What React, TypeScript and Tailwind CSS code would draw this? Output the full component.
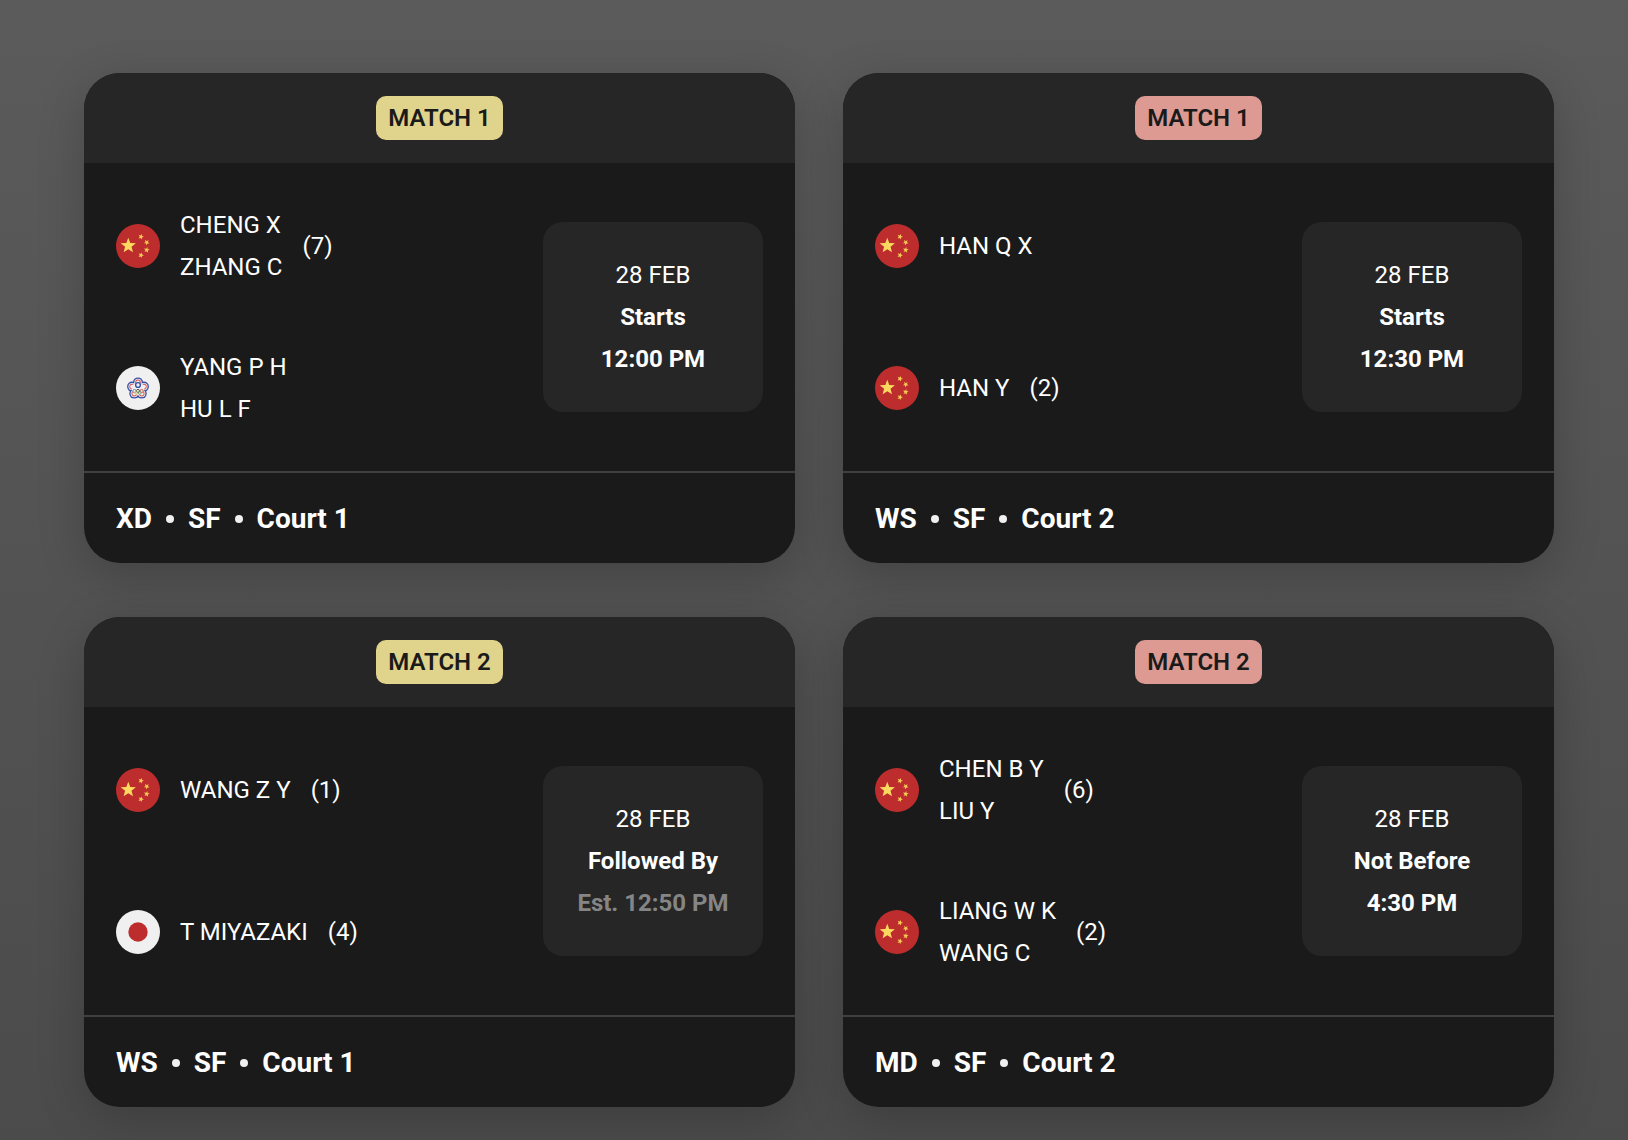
type Flag = 'cn' | 'tpe' | 'jp';

type Side = {
  flag: Flag;
  names: string[];
  seed?: string;
};

type Match = {
  label: string;
  badge: string;
  sides: Side[];
  date: string;
  status: string;
  time: string;
  muted?: boolean;
  footer: string[];
};

const matches: Match[] = [
  {
    label: 'MATCH 1',
    badge: 'bg-[#e0d38c]',
    sides: [
      { flag: 'cn', names: ['CHENG X', 'ZHANG C'], seed: '(7)' },
      { flag: 'tpe', names: ['YANG P H', 'HU L F'] },
    ],
    date: '28 FEB',
    status: 'Starts',
    time: '12:00 PM',
    footer: ['XD', 'SF', 'Court 1'],
  },
  {
    label: 'MATCH 1',
    badge: 'bg-[#dc9a92]',
    sides: [
      { flag: 'cn', names: ['HAN Q X'] },
      { flag: 'cn', names: ['HAN Y'], seed: '(2)' },
    ],
    date: '28 FEB',
    status: 'Starts',
    time: '12:30 PM',
    footer: ['WS', 'SF', 'Court 2'],
  },
  {
    label: 'MATCH 2',
    badge: 'bg-[#e0d38c]',
    sides: [
      { flag: 'cn', names: ['WANG Z Y'], seed: '(1)' },
      { flag: 'jp', names: ['T MIYAZAKI'], seed: '(4)' },
    ],
    date: '28 FEB',
    status: 'Followed By',
    time: 'Est. 12:50 PM',
    muted: true,
    footer: ['WS', 'SF', 'Court 1'],
  },
  {
    label: 'MATCH 2',
    badge: 'bg-[#dc9a92]',
    sides: [
      { flag: 'cn', names: ['CHEN B Y', 'LIU Y'], seed: '(6)' },
      { flag: 'cn', names: ['LIANG W K', 'WANG C'], seed: '(2)' },
    ],
    date: '28 FEB',
    status: 'Not Before',
    time: '4:30 PM',
    footer: ['MD', 'SF', 'Court 2'],
  },
];

function star(cx: number, cy: number, r: number, rot = 0) {
  const pts: string[] = [];
  for (let i = 0; i < 10; i++) {
    const rad = i % 2 === 0 ? r : r * 0.42;
    const a = ((-90 + rot + i * 36) * Math.PI) / 180;
    pts.push(`${(cx + rad * Math.cos(a)).toFixed(2)},${(cy + rad * Math.sin(a)).toFixed(2)}`);
  }
  return pts.join(' ');
}

const petals = [
  [22, 16.4],
  [27.9, 20.6],
  [25.7, 27.6],
  [18.3, 27.6],
  [16.1, 20.6],
];

function FlagIcon({ flag }: { flag: Flag }) {
  if (flag === 'cn') {
    return (
      <svg width="44" height="44" viewBox="0 0 44 44" className="shrink-0">
        <circle cx="22" cy="22" r="22" fill="#bd2d2d" />
        <polygon points={star(12.3, 21.8, 8)} fill="#fbd95f" />
        <polygon points={star(25, 12.7, 3, 20)} fill="#f5cb55" />
        <polygon points={star(30.7, 18.4, 3, 40)} fill="#f5cb55" />
        <polygon points={star(30.7, 26, 3, 10)} fill="#f5cb55" />
        <polygon points={star(25, 31.2, 3, 20)} fill="#f5cb55" />
      </svg>
    );
  }
  if (flag === 'jp') {
    return (
      <svg width="44" height="44" viewBox="0 0 44 44" className="shrink-0">
        <circle cx="22" cy="22" r="22" fill="#f0f0f0" />
        <circle cx="22" cy="22" r="9.7" fill="#bd2d2d" />
      </svg>
    );
  }
  return (
    <svg width="44" height="44" viewBox="0 0 44 44" className="shrink-0">
      <circle cx="22" cy="22" r="22" fill="#f0f0f0" />
      {petals.map(([x, y], i) => (
        <circle key={i} cx={x} cy={y} r="5" fill="#3650a8" />
      ))}
      {petals.map(([x, y], i) => (
        <circle key={i} cx={x} cy={y} r="3.7" fill="#f0f0f0" />
      ))}
      <circle cx="22" cy="22.6" r="6" fill="#f0f0f0" />
      {petals.map(([x, y], i) => (
        <circle key={i} cx={x} cy={y} r="2.8" fill="#d9534e" />
      ))}
      {petals.map(([x, y], i) => (
        <circle key={i} cx={x} cy={y} r="1.9" fill="#f0f0f0" />
      ))}
      <circle cx="22" cy="22.6" r="6.2" fill="#f0f0f0" />
      <circle cx="22" cy="19" r="2.4" fill="#f0f0f0" stroke="#3650a8" strokeWidth="1.4" />
      <g fill="none" strokeWidth="0.9">
        <circle cx="18.4" cy="25" r="1.6" stroke="#5a7fc0" />
        <circle cx="22" cy="25" r="1.6" stroke="#444" />
        <circle cx="25.6" cy="25" r="1.6" stroke="#d0504b" />
        <circle cx="20.2" cy="26.6" r="1.6" stroke="#d9bf5c" />
        <circle cx="23.8" cy="26.6" r="1.6" stroke="#6aa870" />
      </g>
    </svg>
  );
}

function SideRow({ side }: { side: Side }) {
  return (
    <div className="flex min-h-[84px] items-center gap-5">
      <FlagIcon flag={side.flag} />
      <div className="flex flex-col">
        {side.names.map((n) => (
          <span key={n} className="whitespace-nowrap">
            {n}
          </span>
        ))}
      </div>
      {side.seed && <span>{side.seed}</span>}
    </div>
  );
}

function MatchCard({ match }: { match: Match }) {
  return (
    <div className="flex h-[490px] flex-col rounded-[36px] bg-[#1a1a1a] text-[24px] leading-[42px] text-white shadow-[0_12px_48px_rgba(0,0,0,0.2)]">
      <div className="flex h-[90px] items-center justify-center rounded-t-[36px] bg-[#262626]">
        <span className={`flex h-11 items-center rounded-[10px] px-3 font-semibold text-[#1a1a1a] ${match.badge}`}>
          {match.label}
        </span>
      </div>

      <div className="flex h-[308px] items-center justify-between px-8">
        <div className="flex flex-col gap-[58px]">
          {match.sides.map((s, i) => (
            <SideRow key={i} side={s} />
          ))}
        </div>
        <div className="flex h-[190px] w-[220px] flex-col items-center justify-center rounded-[20px] bg-[#262626]">
          <span>{match.date}</span>
          <span className="font-bold">{match.status}</span>
          <span className={match.muted ? 'font-bold text-[#858585]' : 'font-bold'}>{match.time}</span>
        </div>
      </div>

      <div className="flex h-[92px] items-center gap-[14px] border-t-2 border-[#404040] px-8 pt-0.5 text-[28px] font-bold">
        {match.footer.map((part, i) => (
          <div key={part} className="flex items-center gap-[14px]">
            {i > 0 && <span className="size-2 rounded-full bg-[#f0f0f0]" />}
            <span>{part}</span>
          </div>
        ))}
      </div>
    </div>
  );
}

export default function App() {
  return (
    <div className="min-h-screen bg-gradient-to-b from-[#5b5b5b] to-[#4b4b4b] pt-[73px] pr-[74px] pb-[33px] pl-[84px] font-[Roboto,sans-serif]">
      <div className="grid grid-cols-2 gap-x-12 gap-y-[54px]">
        {matches.map((m, i) => (
          <MatchCard key={i} match={m} />
        ))}
      </div>
    </div>
  );
}
